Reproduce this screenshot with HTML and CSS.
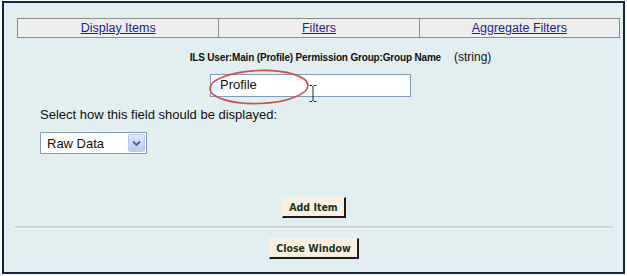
FILE: index.html
```html
<!DOCTYPE html>
<html>
<head>
<meta charset="utf-8">
<link rel="stylesheet" href="styles.css">
</head>
<body>
<div class="frame">
  <div class="tabs">
    <div class="tab"><a href="#">Display Items</a></div>
    <div class="tab"><a href="#">Filters</a></div>
    <div class="tab"><a href="#">Aggregate Filters</a></div>
  </div>
  <div class="heading"><b>ILS User:Main (Profile) Permission Group:Group Name</b><span class="type">(string)</span></div>
  <div class="field-row">
    <div class="input">Profile</div>
    <svg class="ring" width="106" height="40" viewBox="0 0 106 40"><ellipse cx="52" cy="20" rx="49" ry="16.5" fill="none" stroke="#d45050" stroke-width="1.6" transform="rotate(-2 52 20)"/></svg>
    <svg class="ibeam" width="10" height="19" viewBox="0 0 10 19"><path d="M1.5 1.5h2.5M6 1.5h2.5M5 2v15M1.5 17.5h2.5M6 17.5h2.5" stroke="#222" stroke-width="1" fill="none"/></svg>
  </div>
  <div class="label">Select how this field should be displayed:</div>
  <div class="select"><span class="sel-text">Raw Data</span><span class="arrow"><svg width="9" height="7" viewBox="0 0 9 7"><path d="M1 1.5l3.5 3.5 3.5-3.5" stroke="#4a5f8c" stroke-width="1.8" fill="none"/></svg></span></div>
  <div class="btn-row add-row"><span class="btn">Add Item</span></div>
  <div class="sep"></div>
  <div class="btn-row close-row"><span class="btn">Close Window</span></div>
</div>
</body>
</html>
```
FILE: styles.css
```css
body {
  margin: 0;
  background: #ffffff;
  font-family: "Liberation Sans", Arial, sans-serif;
  color: #111;
}
.frame {
  margin: 1px 0 0 2px;
  width: 623px;
  height: 273px;
  box-sizing: border-box;
  border: 2px solid #13215a;
  background: #e1eff0;
  padding: 15px 10px 0 11px;
}
.tabs {
  display: grid;
  grid-template-columns: repeat(3, 1fr);
  margin: 0 -7px 0 2px;
  height: 20px;
  box-sizing: border-box;
  border: 1px solid #8c8c8c;
  background: #eeefed;
}
.tab {
  text-align: center;
  font-size: 12.5px;
  line-height: 18px;
  border-left: 1px solid #8c8c8c;
}
.tab:first-child { border-left: none; }
.tab a { color: #1c1ca0; text-decoration: underline; }
.heading {
  margin-top: 12px;
  display: flex;
  justify-content: center;
  align-items: baseline;
  font-size: 12px;
  line-height: 14px;
  padding-left: 53px;
}
.heading b {
  font-size: 10px;
  letter-spacing: -0.17px;
}
.type { margin-left: 13px; }
.field-row {
  position: relative;
  margin-top: 9px;
  height: 23px;
}
.input {
  margin-left: 195px;
  width: 201px;
  height: 23px;
  box-sizing: border-box;
  border: 1px solid #7f9db9;
  background: #fff;
  font-size: 13px;
  line-height: 20px;
  padding-left: 9px;
}
.ring { position: absolute; left: 192px; top: -7px; }
.ibeam { position: absolute; left: 293px; top: 10px; }
.label {
  margin-top: 10px;
  padding-left: 25px;
  font-size: 13px;
  line-height: 15px;
}
.select {
  margin: 10px 0 0 25px;
  width: 107px;
  height: 22px;
  box-sizing: border-box;
  border: 1px solid #7f9db9;
  background: #fff;
  display: flex;
  align-items: center;
  justify-content: space-between;
  padding: 1px;
  font-size: 13px;
}
.sel-text { padding-left: 5px; }
.arrow {
  width: 17px;
  height: 18px;
  box-sizing: border-box;
  border: 1px solid #b8c8ee;
  border-radius: 2px;
  background: linear-gradient(#dfe8fc, #b9cbf2);
  display: flex;
  align-items: center;
  justify-content: center;
}
.btn-row { display: flex; justify-content: center; }
.add-row { margin-top: 43px; }
.close-row { margin-top: 9px; }
.btn {
  display: inline-block;
  background: #fbefdf;
  color: #17361a;
  font-family: "DejaVu Sans Condensed", "DejaVu Sans", sans-serif;
  font-weight: bold;
  font-size: 10.5px;
  line-height: 18px;
  padding: 0 6px;
  border-top: 1px solid #f4f4ee;
  border-left: 1px solid #f4f4ee;
  border-right: 2px solid #1a1a1a;
  border-bottom: 2px solid #1a1a1a;
}
.sep {
  margin-top: 8px;
  height: 2px;
  background: #cad7d7;
  border-bottom: 1px solid #f2f8f8;
}
```
